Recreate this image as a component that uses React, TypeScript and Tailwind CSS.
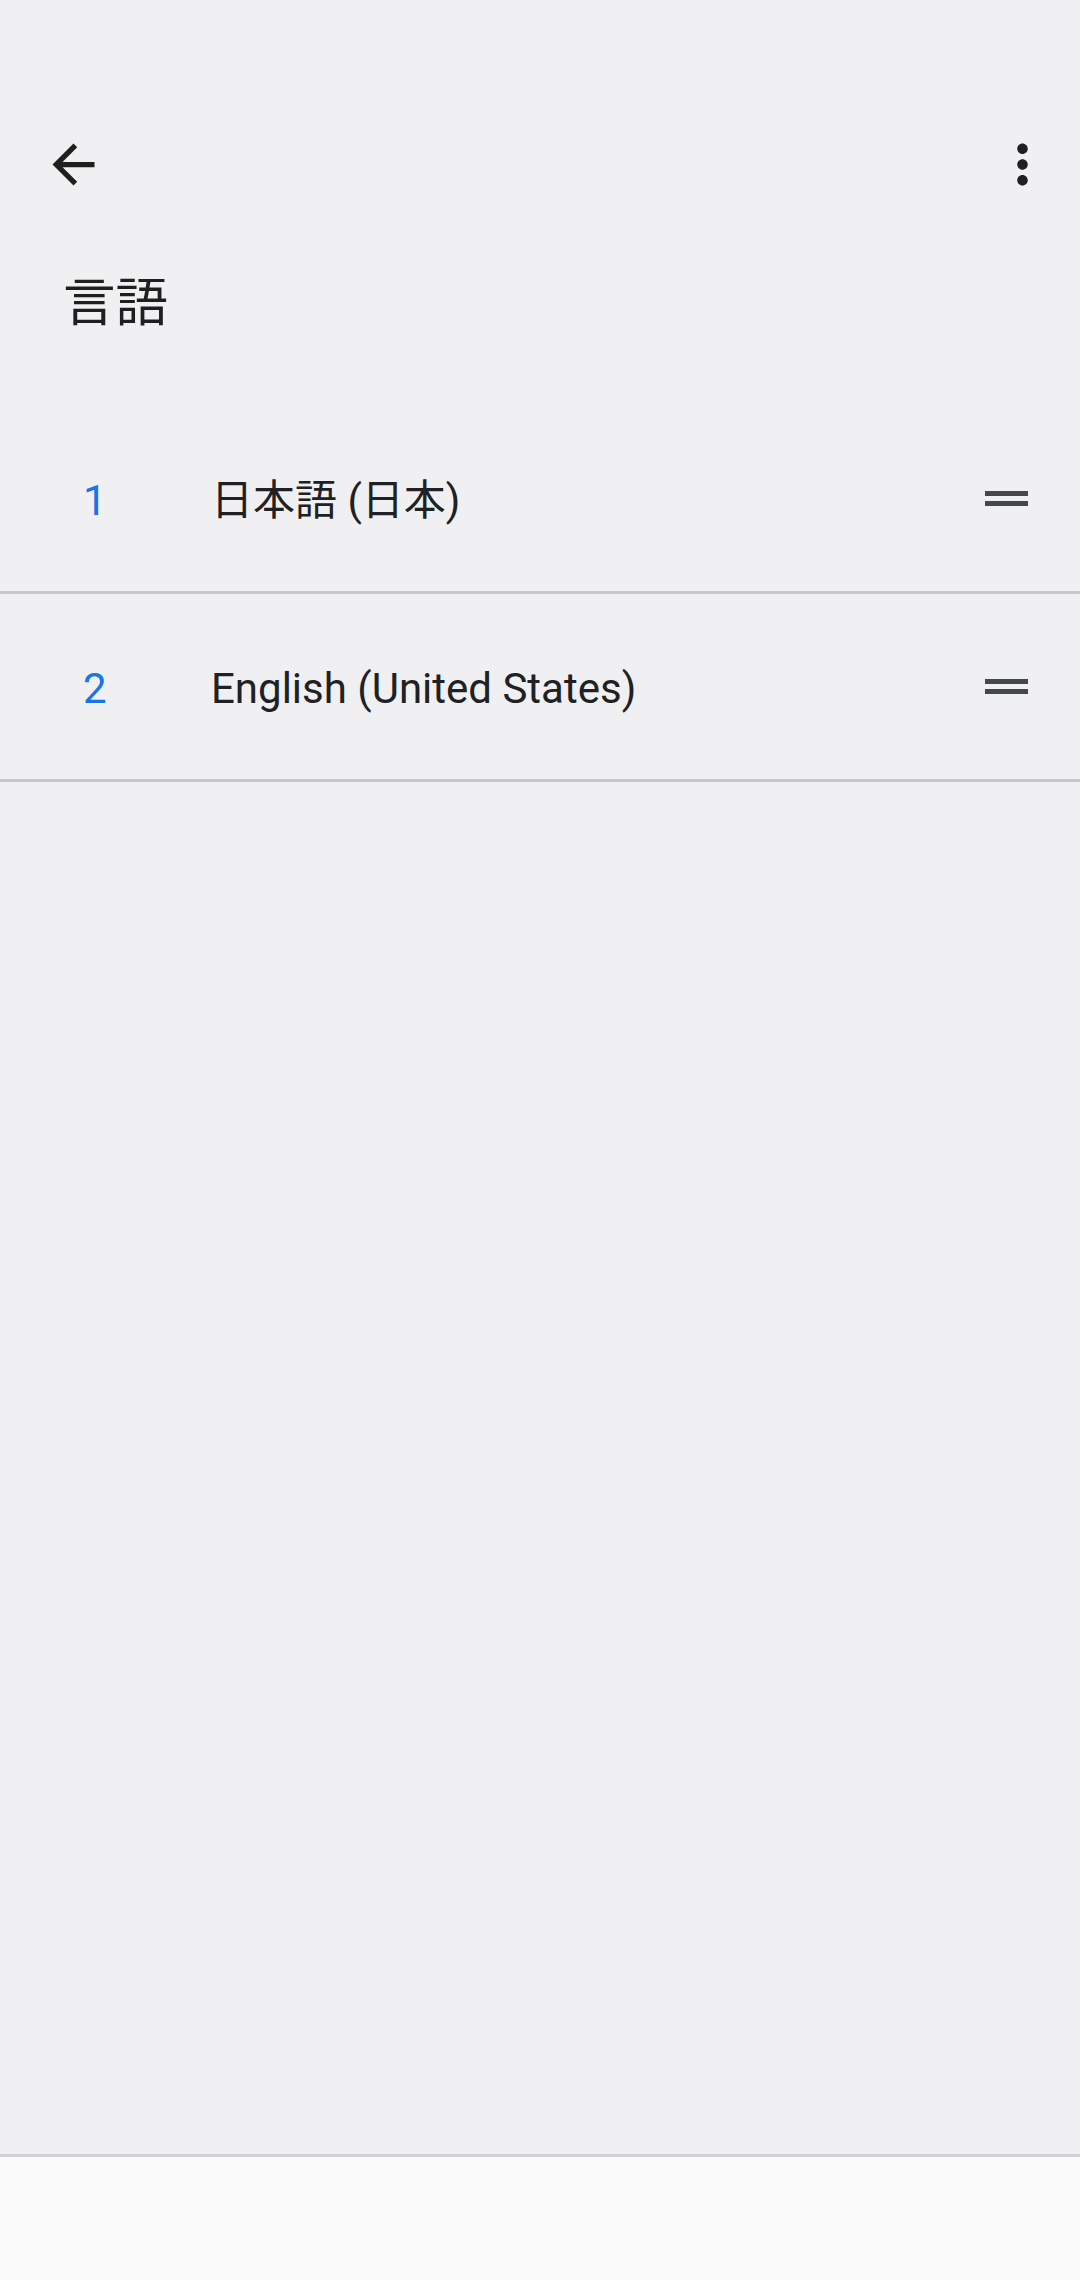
export default function App() {
  const langs = [
    { n: '1', label: '日本語 (日本)' },
    { n: '2', label: 'English (United States)' },
  ]

  return (
    <div className="w-[1080px] h-[2280px] flex flex-col bg-[#f0f0f2] font-['Roboto','Noto_Sans_CJK_JP',sans-serif] text-[#202124]">
      {/* status bar space */}
      <div className="h-[100px]" />

      {/* toolbar */}
      <div className="h-[128px] flex items-center justify-between pl-[42px] pr-[26px]">
        <svg viewBox="0 0 24 24" className="w-[63px] h-[63px]" fill="#1f1f1f">
          <path d="M20 11H7.83l5.59-5.59L12 4l-8 8 8 8 1.41-1.41L7.83 13H20v-2z" />
        </svg>
        <svg viewBox="0 0 24 24" className="w-[63px] h-[63px]" fill="#1f1f1f">
          <path d="M12 8c1.1 0 2-.9 2-2s-.9-2-2-2-2 .9-2 2 .9 2 2 2zm0 2c-1.1 0-2 .9-2 2s.9 2 2 2 2-.9 2-2-.9-2-2-2zm0 6c-1.1 0-2 .9-2 2s.9 2 2 2 2-.9 2-2-.9-2-2-2z" />
        </svg>
      </div>

      {/* title */}
      <div className="h-[178px] pl-[63px] pt-[40px]">
        <h1 className="text-[52.5px] leading-[60px] font-normal text-[#1f1f1f] font-['Noto_Sans_CJK_JP',sans-serif]">言語</h1>
      </div>

      {/* language list */}
      <div className="flex flex-col">
        {langs.map((l) => (
          <div
            key={l.n}
            className="h-[188px] pt-[4px] flex items-center border-b-[3px] border-[#c8c8ca]"
          >
            <span className="w-[211px] shrink-0 pl-[83px] text-[42px] text-[#1a73e8]">{l.n}</span>
            <span className="flex-1 text-[42px] text-[#202124]">{l.label}</span>
            <div className="w-[43px] mr-[52px] mb-[4px] flex flex-col gap-[5px]">
              <div className="h-[5px] bg-[#43474e]" />
              <div className="h-[5px] bg-[#43474e]" />
            </div>
          </div>
        ))}
      </div>

      <div className="flex-1" />

      {/* bottom bar */}
      <div className="h-[126px] bg-[#fafafa] border-t-[3px] border-[#d2d2d4]" />
    </div>
  )
}
